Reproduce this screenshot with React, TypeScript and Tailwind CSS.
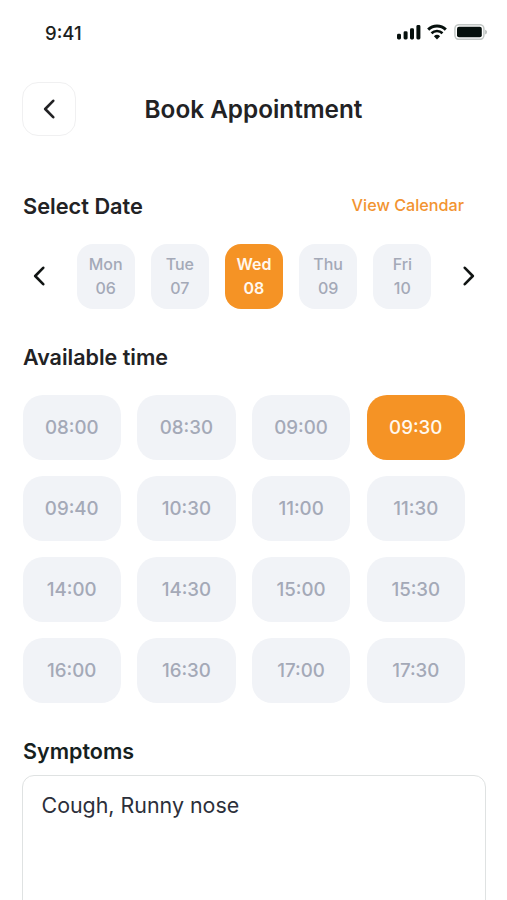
import { useState } from "react";

const DAYS = [
  { day: "Mon", date: "06" },
  { day: "Tue", date: "07" },
  { day: "Wed", date: "08" },
  { day: "Thu", date: "09" },
  { day: "Fri", date: "10" },
];

const TIMES = [
  "08:00", "08:30", "09:00", "09:30",
  "09:40", "10:30", "11:00", "11:30",
  "14:00", "14:30", "15:00", "15:30",
  "16:00", "16:30", "17:00", "17:30",
];

function Chevron({ direction, className }: { direction: "left" | "right"; className?: string }) {
  return (
    <svg width="12" height="20" viewBox="0 0 12 20" fill="none" className={className}>
      <path
        d={direction === "left" ? "M10.2 1.8 2.2 10l8 8.2" : "M1.8 1.8l8 8.2-8 8.2"}
        stroke="currentColor"
        strokeWidth="2.6"
        strokeLinecap="round"
        strokeLinejoin="round"
      />
    </svg>
  );
}

function StatusBar() {
  return (
    <div className="flex h-[66px] items-center justify-between pr-5 pl-[45px]">
      <span className="text-[18.5px] leading-6 font-medium text-[#1c1f1e]">9:41</span>
      <div className="flex items-center pb-0.5 text-[#06100d]">
        <svg width="24" height="16" viewBox="0 0 24 16" fill="currentColor">
          <rect x="0" y="9.8" width="4" height="5.7" rx="1.4" />
          <rect x="6.6" y="7.3" width="4" height="8.2" rx="1.4" />
          <rect x="13" y="4.2" width="4" height="11.3" rx="1.4" />
          <rect x="19.4" y="1" width="4" height="14.5" rx="1.4" />
        </svg>
        <svg width="20" height="16" viewBox="0 0 20 16" className="ml-1.5">
          <path d="M1.2 5.6a12.6 12.6 0 0 1 17.6 0" fill="none" stroke="currentColor" strokeWidth="3" />
          <path d="M4.5 9.2a7.9 7.9 0 0 1 11 0" fill="none" stroke="currentColor" strokeWidth="2.6" />
          <path d="M10 15.4 6.9 12.3a4.5 4.5 0 0 1 6.2 0Z" fill="currentColor" />
        </svg>
        <svg width="33" height="16" viewBox="0 0 33 16" className="ml-[7px]">
          <rect x="0.9" y="0.7" width="29" height="14.6" rx="4" fill="none" stroke="#c2c7c5" strokeWidth="1.5" />
          <rect x="3" y="2.8" width="24.8" height="10.4" rx="2" fill="currentColor" />
          <path d="M31.2 5.8v4.6c1.3-.4 1.7-1.3 1.7-2.3s-.4-1.9-1.7-2.3Z" fill="#b3b8b6" />
        </svg>
      </div>
    </div>
  );
}

export default function App() {
  const [selectedDate, setSelectedDate] = useState("08");
  const [selectedTime, setSelectedTime] = useState("09:30");

  return (
    <main className="h-[900px] w-[507px] overflow-hidden bg-white font-['Inter',sans-serif] text-[#222224]">
      <StatusBar />

      <header className="mt-4 grid h-[54px] grid-cols-[54px_1fr_54px] items-center px-[22px]">
        <button className="flex h-[54px] w-[54px] items-center justify-center rounded-2xl border border-[#f0f0f1]">
          <Chevron direction="left" />
        </button>
        <h1 className="text-center text-[24.3px] leading-8 font-semibold">Book Appointment</h1>
      </header>

      <section className="mt-[54px] pl-[23px]">
        <div className="flex h-8 w-[441px] items-center justify-between">
          <h2 className="text-[21.75px] leading-8 font-semibold">Select Date</h2>
          <button className="pb-0.5 text-[16.2px] leading-8 font-medium text-[#f29431]">View Calendar</button>
        </div>

        <div className="mt-[21.5px] flex items-center">
          <button className="ml-[9.5px] pb-px text-[#101413]">
            <Chevron direction="left" />
          </button>
          <div className="ml-8 flex gap-4">
            {DAYS.map((d) => (
              <button
                key={d.date}
                onClick={() => setSelectedDate(d.date)}
                className={`flex h-[65px] w-[58.2px] flex-col items-center justify-center rounded-2xl pb-px text-base leading-6 ${
                  d.date === selectedDate
                    ? "bg-[#f59325] font-semibold text-[#fff8ee]"
                    : "bg-[#f1f3f7] font-medium text-[#a4a9b7]"
                }`}
              >
                <span>{d.day}</span>
                <span>{d.date}</span>
              </button>
            ))}
          </div>
          <button className="ml-8 pb-px text-[#101413]">
            <Chevron direction="right" />
          </button>
        </div>
      </section>

      <section className="mt-[32.5px] pl-[22.5px]">
        <h2 className="pl-[0.5px] text-[21.5px] leading-8 font-semibold">Available time</h2>
        <div className="mt-[21.5px] grid w-[442.5px] grid-cols-4 gap-x-[16.2px] gap-y-4">
          {TIMES.map((time) => (
            <button
              key={time}
              onClick={() => setSelectedTime(time)}
              className={`h-[65px] rounded-[20px] pt-px text-[18.7px] leading-7 font-medium ${
                time === selectedTime ? "bg-[#f59325] text-[#fff8ee]" : "bg-[#f1f3f7] text-[#a4a9b7]"
              }`}
            >
              {time}
            </button>
          ))}
        </div>
      </section>

      <section className="mt-[32.5px] pl-[22px]">
        <h2 className="pl-px text-[21.5px] leading-8 font-semibold text-[#15211e]">Symptoms</h2>
        <div className="mt-2 h-[180px] w-[464px] rounded-xl border-[1.5px] border-[#dfe2e2] px-[18.5px] py-[13px] text-[21.4px] leading-8 text-[#2c2f3a]">
          Cough, Runny nose
        </div>
      </section>
    </main>
  );
}
